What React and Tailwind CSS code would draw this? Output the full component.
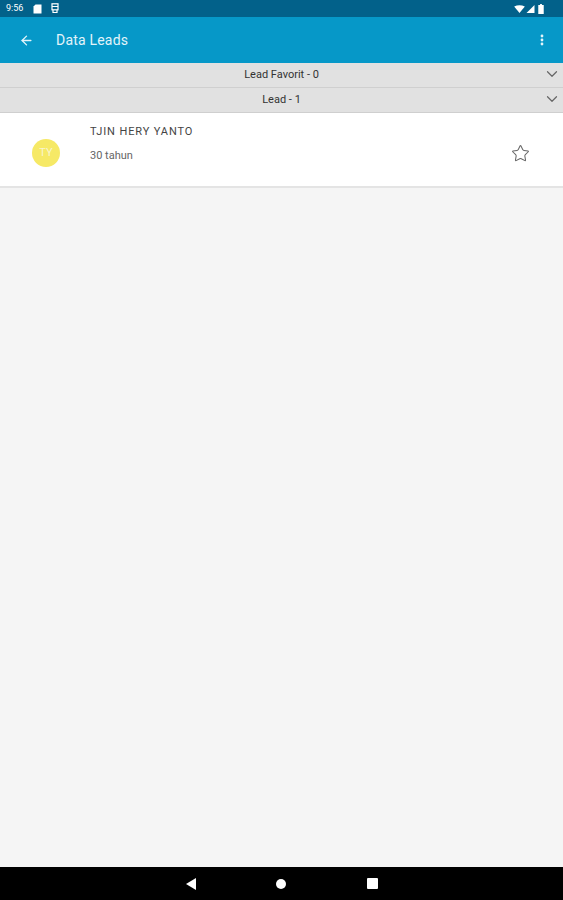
import { ChevronDown, ArrowLeft, Star } from "lucide-react";

function StatusBar() {
    return (
        <div className="h-[17px] bg-[#02618a] flex items-center pl-[6px] pr-[19px] text-white">
            <span className="text-[9px] leading-none">9:56</span>
            <svg className="ml-[10px]" width="9" height="10" viewBox="0 0 9 10" fill="#ffffff">
                <path d="M2.5 0.5H8.5V9.5H0.5V2.5Z" />
            </svg>
            <svg className="ml-[9px]" width="8" height="11" viewBox="0 0 8 11" fill="none" stroke="#ffffff" strokeWidth="1.2">
                <rect x="1" y="0.8" width="6" height="6" />
                <path d="M1 3.5H7M2 7V9.5H6V7" />
            </svg>
            <div className="ml-auto flex items-center gap-[1px]">
                <svg width="11" height="8" viewBox="0 0 12 9" fill="#ffffff">
                    <path d="M0 1.8Q6 -1.2 12 1.8L6 9Z" />
                </svg>
                <svg width="9" height="8" viewBox="0 0 10 9" fill="#ffffff">
                    <path d="M9.5 0V9H0.5Z" />
                </svg>
                <svg className="ml-[2px]" width="6" height="10" viewBox="0 0 6 11" fill="#ffffff">
                    <path d="M2 0H4V1H6V11H0V1H2Z" />
                </svg>
            </div>
        </div>
    );
}

function Header() {
    return (
        <div className="h-[46px] bg-[#0698c8] flex items-center pl-[19px] pr-[19px] text-[#e3f4fa]">
            <ArrowLeft size={15} strokeWidth={2.2} />
            <span className="ml-[22px] text-[14px] tracking-[0.2px]">Data Leads</span>
            <svg className="ml-auto" width="4" height="12" viewBox="0 0 4 12" fill="#e3f4fa">
                <circle cx="2" cy="2" r="1.4" />
                <circle cx="2" cy="6" r="1.4" />
                <circle cx="2" cy="10" r="1.4" />
            </svg>
        </div>
    );
}

function SectionBar({ label }) {
    return (
        <div className="relative h-[25px] bg-[#e1e1e1] border-b border-[#cfcfcf] flex items-center justify-center">
            <span className="text-[11px] text-[#333333]">{label}</span>
            <ChevronDown className="absolute right-[2px] top-[2px] text-[#666666]" size={18} strokeWidth={1.6} />
        </div>
    );
}

function LeadRow() {
    return (
        <div className="h-[75px] bg-white border-b-2 border-[#e4e4e4] flex items-center pl-[32px] pr-[33px] pt-[7px]">
            <div className="w-[28px] h-[28px] rounded-full bg-[#f6e966] flex items-center justify-center text-[11px] text-[#f8f5cf]">
                TY
            </div>
            <div className="ml-[30px] self-start pt-[5px]">
                <div className="text-[11px] tracking-[0.9px] leading-[13px] text-[#444444]">TJIN HERY YANTO</div>
                <div className="mt-[11px] text-[11px] leading-[13px] text-[#666666]">30 tahun</div>
            </div>
            <Star className="ml-auto text-[#666666]" size={19} strokeWidth={1.3} />
        </div>
    );
}

export default function App() {
    return (
        <div className="h-[900px] flex flex-col bg-[#f5f5f5] font-['Roboto',sans-serif]">
            <StatusBar />
            <Header />
            <SectionBar label="Lead Favorit - 0" />
            <SectionBar label="Lead - 1" />
            <LeadRow />
            <div className="flex-1" />
            <div className="h-[33px] bg-black flex items-center justify-center">
                <svg width="10" height="12" viewBox="0 0 10 12" fill="#ffffff" className="mr-[80px]">
                    <path d="M10 0V12L0 6Z" />
                </svg>
                <div className="w-[10px] h-[10px] rounded-full bg-white" />
                <div className="ml-[81px] w-[11px] h-[11px] bg-white rounded-[1px]" />
            </div>
        </div>
    );
}
